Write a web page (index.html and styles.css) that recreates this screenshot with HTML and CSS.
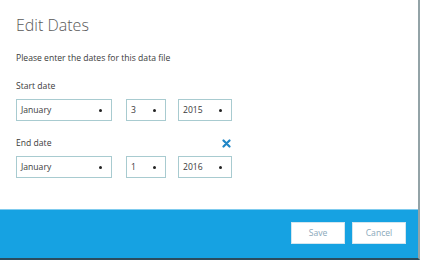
FILE: index.html
```html
<!DOCTYPE html>
<html lang="en">
<head>
  <meta charset="UTF-8">
  <title>Edit Dates</title>
  <link rel="stylesheet" href="styles.css">
</head>
<body>

  <div class="dialog">
    <div class="content">
      <h1>Edit Dates</h1>
      <p class="intro">Please enter the dates for this data file</p>

      <div class="label">Start date</div>
      <div class="row">
        <div class="select month"><span>January</span></div>
        <div class="select day"><span>3</span></div>
        <div class="select year"><span>2015</span></div>
      </div>

      <div class="label label-end">
        <span>End date</span>
        <svg class="clear" width="9" height="9" viewBox="0 0 9 9">
          <path d="M1.5 1.5 L7.5 7.5 M7.5 1.5 L1.5 7.5" stroke="#1f86c6" stroke-width="2.2" stroke-linecap="round"/>
        </svg>
      </div>
      <div class="row">
        <div class="select month"><span>January</span></div>
        <div class="select day"><span>1</span></div>
        <div class="select year"><span>2016</span></div>
      </div>
    </div>

    <div class="footer">
      <button class="btn">Save</button>
      <button class="btn">Cancel</button>
    </div>
  </div>

</body>
</html>
```

FILE: styles.css
```css
body {
  margin: 0;
  padding: 0;
  background: #fff;
  font-family: 'Open Sans', 'Noto Sans', sans-serif;
  color: #444;
}

.dialog {
  width: 418px;
  height: 258px;
  display: flex;
  flex-direction: column;
  border-right: 2px solid #93a3a7;
  border-bottom: 2px solid #2b4c5e;
}

.content {
  flex: 1;
  padding: 14px 16px 0;
}

h1 {
  margin: 0;
  font-size: 16px;
  line-height: 22px;
  font-weight: 300;
  color: #5a5a5a;
}

.intro {
  margin: 15px 0 0;
  font-size: 8.6px;
  line-height: 14px;
  color: #3a3a3a;
}

.label {
  margin-top: 14px;
  font-size: 8.6px;
  line-height: 14px;
  color: #3a3a3a;
}

.label-end {
  width: 216px;
  display: flex;
  justify-content: space-between;
  align-items: center;
  margin-top: 15px;
}

.clear {
  margin-right: 1px;
}

.row {
  display: flex;
  margin-top: 6px;
}

.select {
  position: relative;
  height: 20px;
  border: 1px solid #a8cbd0;
  box-sizing: content-box;
  font-size: 8.6px;
  line-height: 20px;
  color: #3a3a3a;
  padding-left: 4px;
}

.select::after {
  content: '';
  position: absolute;
  right: 9px;
  top: 9px;
  width: 3px;
  height: 3px;
  border-radius: 50%;
  background: #222;
}

.month {
  width: 90px;
}

.day {
  width: 34px;
  margin-left: 14px;
}

.year {
  width: 48px;
  margin-left: 12px;
}

.footer {
  height: 49px;
  background: #16a2e2;
  border-top: 1px solid #7fcbee;
  box-sizing: border-box;
  display: flex;
  justify-content: flex-end;
  align-items: flex-start;
  gap: 7px;
  padding: 12px 12px 0 0;
}

.btn {
  width: 54px;
  height: 22px;
  background: #fff;
  border: 1px solid #d3e6ef;
  font-family: 'Open Sans', 'Noto Sans', sans-serif;
  font-size: 8.6px;
  color: #8aa8ba;
  padding: 0;
  cursor: pointer;
}
```
